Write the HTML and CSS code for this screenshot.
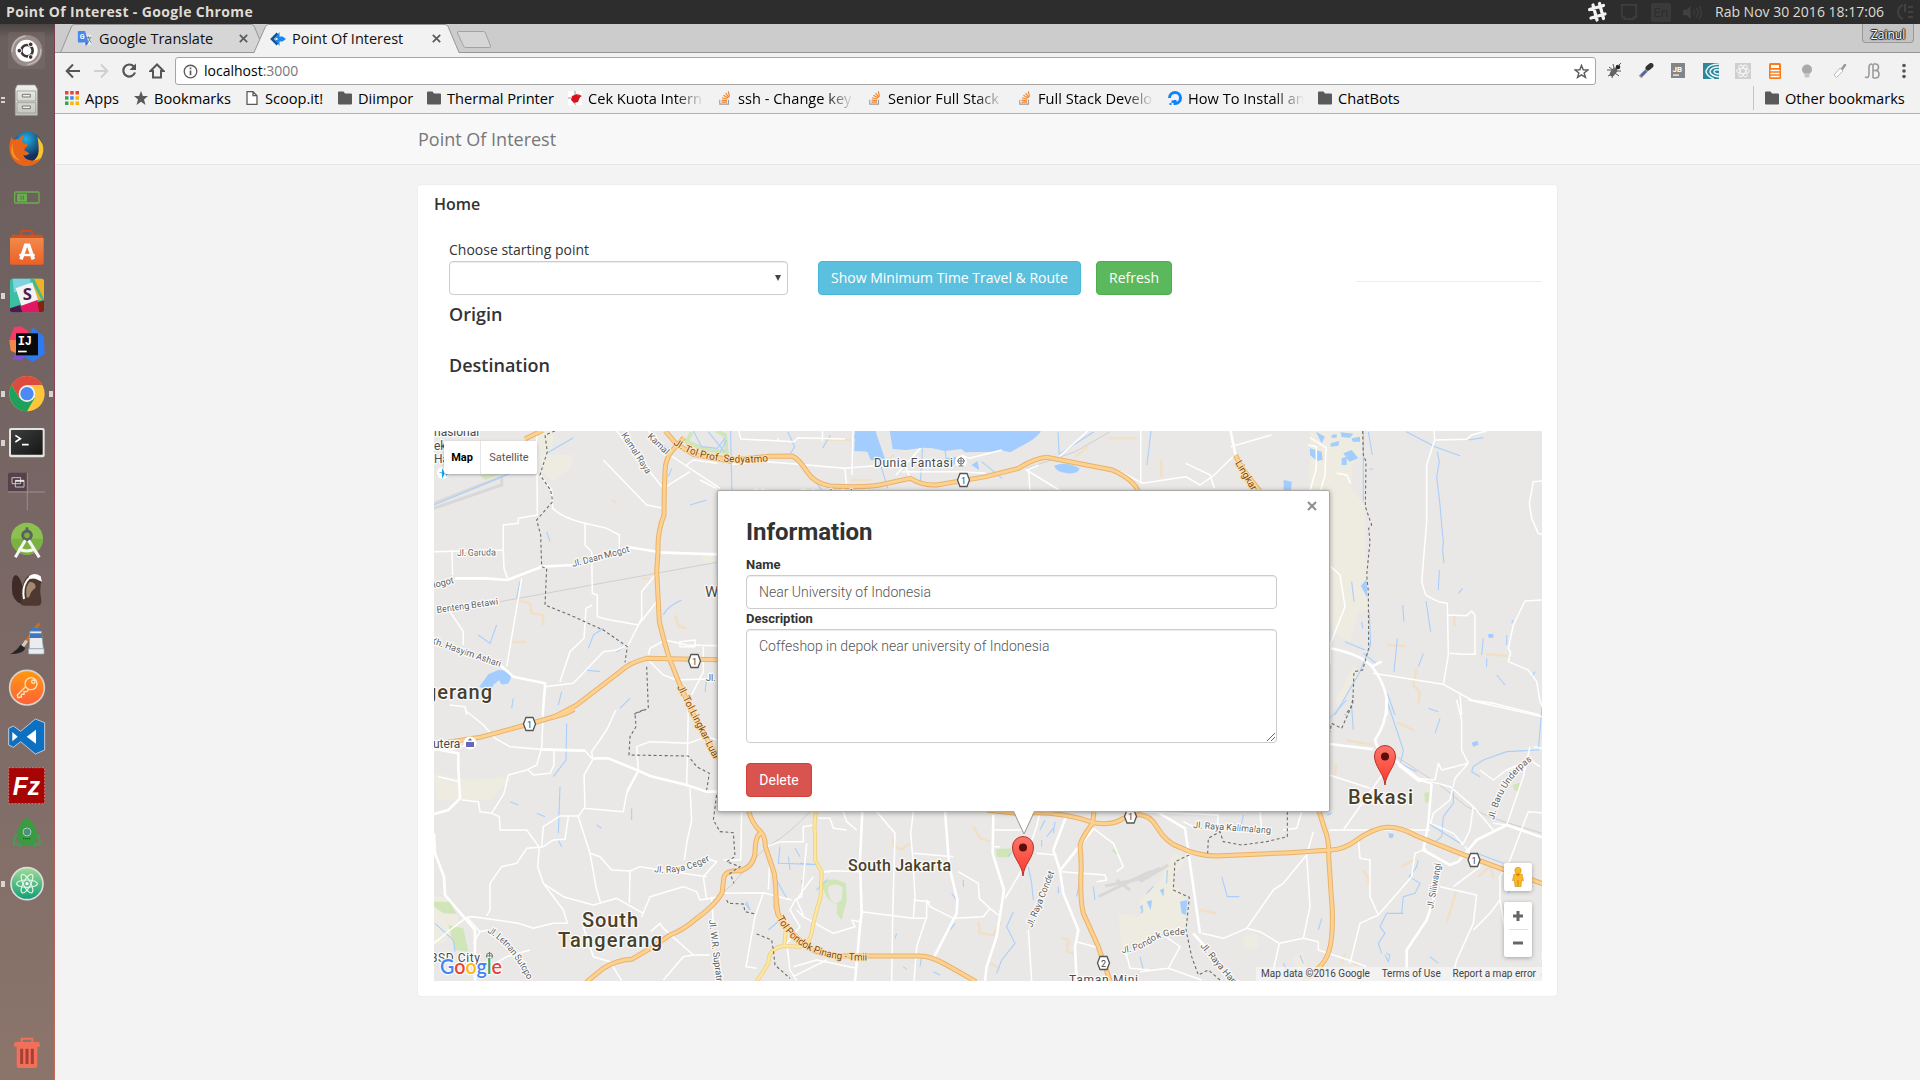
FILE: index.html
```html
<!DOCTYPE html>
<html lang="en">
<head>
<meta charset="utf-8">
<title>Point Of Interest</title>
<link rel="stylesheet" href="styles.css">
</head>
<body>
<svg class="defs" width="0" height="0" aria-hidden="true">
  <defs>
    <symbol id="folder" viewBox="0 0 14 13"><path fill="#5a5a5a" d="M1 0h4.500l1.500 2H13a1 1 0 0 1 1 1v9a1 1 0 0 1-1 1H1a1 1 0 0 1-1-1V1a1 1 0 0 1 1-1z"/></symbol>
    <symbol id="stack" viewBox="0 0 14 16"><path fill="none" stroke="#9a9b9e" stroke-width="1.200" d="M1 10v5h10v-5"/><path fill="none" stroke="#f48024" stroke-width="1.300" d="M3 12.700h6.300M3.100 10.500l6.300.6M3.700 7.800l6 1.700M5.200 4.900l5.300 3.200M7.600 2.400l3.900 5M10.800.5l1.300 6"/></symbol>
    <symbol id="close" viewBox="0 0 9 9"><path stroke="#5a5a5a" stroke-width="1.700" d="M.8.8l7.400 7.400M8.200.8L.8 8.200"/></symbol>
    <linearGradient id="pinfill" x1="0" y1="0" x2="0" y2="1"><stop offset="0" stop-color="#fe7569"/><stop offset="1" stop-color="#f8392b"/></linearGradient>
    <linearGradient id="atomfill" x1="0" y1="0" x2="0" y2="1"><stop offset="0" stop-color="#9fdc94"/><stop offset="1" stop-color="#0f9d76"/></linearGradient>
    <linearGradient id="keyfill" x1="0" y1="0" x2="0" y2="1"><stop offset="0" stop-color="#ff9a10"/><stop offset="1" stop-color="#ff5f3a"/></linearGradient>
    <linearGradient id="bagfill" x1="0" y1="0" x2="0" y2="1"><stop offset="0" stop-color="#f08a4c"/><stop offset="1" stop-color="#ee5f25"/></linearGradient>
    <linearGradient id="termfill" x1="0" y1="0" x2="1" y2="1"><stop offset="0" stop-color="#3c3f3e"/><stop offset="1" stop-color="#151515"/></linearGradient>
    <linearGradient id="cabfill" x1="0" y1="0" x2="0" y2="1"><stop offset="0" stop-color="#f1f1ed"/><stop offset="1" stop-color="#c3c4bd"/></linearGradient>
    <radialGradient id="foxfill" cx=".45" cy=".25" r=".6"><stop offset="0" stop-color="#1fb1e6"/><stop offset="1" stop-color="#15305f"/></radialGradient>
    <g id="pin"><path fill="url(#pinfill)" stroke="#b8322a" d="M0 40C-1 28-10.500 22-10.500 11a10.500 10.500 0 0 1 21 0C10.500 22 1 28 0 40z"/><circle cy="11.500" r="4" fill="#590e0b"/></g>
    <g id="shield"><path fill="#fff" stroke="#555" stroke-width="1.300" d="M-3.500-6.500h7L6 0 3.500 6.500h-7L-6 0z"/></g>
    <g id="motorways">
      <g transform="translate(430 425) scale(.33333)">
        <path d="M706 18L738 56M762 38L728 75Q706 100 705 140L703 190L702 270Q682 320 684 380L680 440L688 590Q705 660 718 700L750 780L795 880"/>
        <path d="M864 704L650 700Q600 712 570 740L440 840L368 878M285 42L338 16M738 56L790 88L905 110"/>
      </g>
      <g transform="translate(430 710) scale(.33333)">
        <path d="M432-2Q410 12 380 18L298 42L150 82L55 97M780 0L865 145M955 300Q965 340 992 365Q1006 380 1006 410L1033 490Q1040 540 1038 590L1046 620"/>
        <path d="M992 368Q975 380 975 430Q970 470 930 483Q890 480 882 500L876 550Q850 590 800 625Q760 660 720 675L670 710L605 748Q560 750 520 775L468 817"/>
      </g>
      <g transform="translate(700 425) scale(.40816 .33333)"><path d="M0 90L80 104L170 94L225 93Q240 98 262 140Q280 175 320 183Q400 188 440 180L515 160Q545 182 580 180L700 155L780 130Q820 100 850 97L1010 135Q1065 165 1076 205M1312 90Q1325 130 1372 198"/></g>
      <g transform="translate(700 700) scale(.33333)"><path d="M227 590L235 645Q270 700 330 745Q360 765 440 768L650 768Q690 765 740 795L828 845M860 330L945 340Q1080 330 1180 368Q1240 378 1270 355L1290 350L1322 343M1183 325L1178 370Q1140 420 1140 440Q1145 480 1143 520Q1140 600 1150 640L1195 740L1231 845"/></g>
      <g transform="translate(1140 700) scale(.33333)"><path d="M-8 343Q30 345 50 380Q80 430 120 442Q170 468 230 468L450 458L570 450Q610 450 650 420Q700 385 740 382Q780 380 830 408L960 460L1090 508L1210 552M535 328L555 390Q568 420 566 470L574 590Q580 650 575 710Q570 770 540 800L490 845"/></g>
    </g>
    <g id="avenue"><path transform="translate(700 700) scale(.33333)" d="M350 325Q340 370 345 400L345 480L365 515L362 590Q340 660 335 700Q325 735 300 740L250 738Q205 745 205 790L170 845M253 738L258 680"/></g>
  </defs>
</svg>

<header class="menubar">
  <span class="window-title">Point Of Interest - Google Chrome</span>
  <span class="indicators">
    <svg class="ind-hash" viewBox="0 0 20 22"><path fill="none" stroke="#f2f2f2" stroke-width="3.200" stroke-linecap="round" d="M6 4l4 15M12.500 2.500l4 15M2.500 8.500l14-4M4 17l14-4"/></svg>
    <svg class="ind-net" viewBox="0 0 20 20"><path fill="none" stroke="#3e3e3e" stroke-width="2" d="M2 2h16v14h-3v2H5v-2H2z"/></svg>
    <span class="ind-lang">En</span>
    <svg class="ind-sound" viewBox="0 0 20 16"><path fill="#414141" d="M0 5h4l4-4v14l-4-4H0z"/><path fill="none" stroke="#3c3c3c" stroke-width="1.500" d="M11 5q2 3 0 6M14 3q4 5 0 10M17 1q5 7 0 14"/></svg>
    <span class="clock">Rab Nov 30 2016 18:17:06</span>
    <svg class="ind-power" viewBox="0 0 18 18"><path fill="none" stroke="#414141" stroke-width="2" d="M7 2a7.500 7.500 0 0 0 0 14M9 1v8M12 4h5M12 9h5M12 14h5"/></svg>
  </span>
</header>

<div class="desktop">
<nav class="launcher">
  <div class="app"><svg viewBox="0 0 111 111"><rect width="111" height="111" rx="8" fill="#80716f" opacity=".4"/><circle cx="56" cy="56" r="47" fill="#9b8d8b"/><path fill="none" stroke="#c3b9b7" stroke-width="4" d="M12 60Q14 20 52 12M98 50q2 40-40 48"/><circle cx="56" cy="56" r="33" fill="#fff"/><circle cx="57" cy="56" r="17" fill="none" stroke="#413634" stroke-width="8"/><g fill="#413634" stroke="#fff" stroke-width="3"><circle cx="34" cy="56" r="7"/><circle cx="68" cy="37" r="7"/><circle cx="68" cy="75" r="7"/></g></svg></div>
  <div class="app"><i class="pips two"></i><svg viewBox="0 0 111 111"><path fill="url(#cabfill)" stroke="#a1a29a" stroke-width="2" d="M28 12h53l7 12v79H22V24z"/><path fill="none" stroke="#8d8f87" stroke-width="2" d="M27 30h56v30H27zM27 65h56v31H27z"/><path fill="#eee" stroke="#777" stroke-width="3" d="M43 40h24v8H43zM43 75h24v8H43z"/></svg></div>
  <div class="app"><svg viewBox="0 0 111 111"><circle cx="58" cy="50" r="45" fill="url(#foxfill)"/><path fill="#f7c531" d="M88 20q20 20 18 42-6 40-44 42 30-18 30-42 0-26-4-42z"/><path fill="#e8641b" d="M12 18Q0 46 6 68q12 40 52 40 26 0 40-24-18 12-34 6-16-4-18-16 10 6 18-4-6-6-14-8-2-8 6-12 4-4 2-8-12 0-16-6 0-10 8-20-14 2-18 12-8-2-14 2-8-4-6-12z"/><path fill="#f39a26" d="M14 38q-4 40 24 54-22-4-28-24-2-14 4-30z"/></svg></div>
  <div class="app"><svg viewBox="0 0 111 111"><rect x="20" y="39" width="73" height="33" rx="3" fill="none" stroke="#6aae4f" stroke-width="4"/><rect x="27" y="44" width="30" height="24" fill="#6aae4f"/><path stroke="#4b7a3b" stroke-width="3" d="M39 50v12M46 50v12"/></svg></div>
  <div class="app"><svg viewBox="0 0 111 111"><path fill="none" stroke="#cf4c1d" stroke-width="6" d="M39 40V15q0-7 8-7h18q8 0 8 7v25"/><path fill="#d5501f" d="M12 20h90l4 12H6z"/><path fill="url(#bagfill)" d="M6 30h101v75q0 5-5 5H11q-5 0-5-5z"/><path fill="none" stroke="#fff" stroke-width="11" d="M39 94l14-42h9l14 42"/><path stroke="#fff" stroke-width="7" d="M34 81h46"/></svg></div>
  <div class="app"><i class="pips"></i><svg viewBox="0 0 111 111"><g><rect x="6" y="5" width="102" height="101" rx="8" fill="#3bbfa2"/><path fill="#7fd3df" d="M14 5h56l-8 22-44 20z"/><path fill="#ecb424" d="M72 5h28q8 0 8 8v60L86 66z"/><path fill="#44b98b" d="M66 5h12l30 62v14z"/><path fill="#e31863" d="M36 84l50-18 14 40H44z"/><path fill="#8b1f14" d="M88 76l20-6v30q0 6-8 6h-6z"/><path fill="#4e1a4b" d="M6 94l30-10 8 22H14q-8 0-8-8z"/><path fill="#f5f2f4" d="M23 34l50-18 17 52-50 18z"/></g><text class="g-slack" x="58" y="69" text-anchor="middle">S</text></svg></div>
  <div class="app"><svg viewBox="0 0 111 111"><path fill="#f43b69" d="M18 4l20-3 24 14-16 32-42-6z"/><path fill="#f7864a" d="M4 42l30 0-4 42-22-10z"/><path fill="#7f52d6" d="M24 80h34L40 104 14 100z"/><path fill="#2f7af0" d="M74 4l34 28 2 52-36 24-32-20z"/><rect x="24" y="22" width="66" height="66" fill="#090909"/><text class="g-ij" x="29" y="58">IJ</text><path fill="#fff" d="M30 74h26v5H30z"/></svg></div>
  <div class="app"><i class="pips"></i><i class="pips right"></i><svg viewBox="0 0 111 111"><circle cx="57" cy="56" r="53" fill="#fbc63c"/><path fill="#dd4b3e" d="M11 30A53 53 0 0 1 103 30H57L34 69z"/><path fill="#1fa15d" d="M11 30A53 53 0 0 0 57 109L80 69H34z"/><circle cx="57" cy="56" r="25" fill="#f2f2f2"/><circle cx="57" cy="56" r="20" fill="#4a8af4"/></svg></div>
  <div class="app"><i class="pips"></i><svg viewBox="0 0 111 111"><rect x="3" y="12" width="107" height="88" rx="6" fill="#e3e3df"/><rect x="9" y="18" width="95" height="74" rx="2" fill="url(#termfill)"/><path fill="none" stroke="#fff" stroke-width="5" d="M22 34l15 10-15 10M42 62h20"/></svg></div>
  <div class="app"><svg viewBox="0 0 111 111"><path fill="#56414a" d="M0 4q0-5 5-5h53v56H0z"/><path stroke="#9c8f8e" stroke-width="3" d="M0 57h111M58 0v111"/><path fill="#4a3b41" stroke="#ddd" stroke-width="2.500" d="M12 14h26v18H12zM22 22h26v20H22z"/><path stroke="#fff" stroke-width="4" d="M22 24h26"/></svg></div>
  <div class="app"><svg viewBox="0 0 111 111"><circle cx="57" cy="50" r="48" fill="#8cc152"/><path fill="#7bb141" d="M9 50a48 48 0 0 0 96 0z"/><circle cx="57" cy="40" r="13" fill="#7bb141" stroke="#5b625e" stroke-width="9"/><path stroke="#5b625e" stroke-width="8" d="M57 16v12"/><path fill="none" stroke="#f5f5f5" stroke-width="9" d="M52 55L22 106M62 55l32 51M31 80q26 14 50 0"/></svg></div>
  <div class="app"><svg viewBox="0 0 111 111"><path fill="#3e2b26" d="M42 100Q10 88 12 50 10 14 24 12q14 6 20 38z"/><path fill="#4e382f" d="M40 102Q36 50 52 24 68 2 92 12q14 12 6 28-4 24 2 46 2 16-10 18H54q-10 0-14-2z"/><path fill="#a18870" d="M56 80Q50 44 66 32q20 2 16 20-14 8-18 26z"/><path fill="none" stroke="#fff" stroke-width="6" d="M48 84Q42 50 56 30 70 8 96 20"/><path fill="#fff" d="M62 16Q80 2 98 16l4 16-10-4q-12-8-24-4z"/></svg></div>
  <div class="app"><svg viewBox="0 0 111 111"><path stroke="#c1712b" stroke-width="9" d="M94 10L46 76"/><path stroke="#ccc" stroke-width="10" d="M56 62L42 82"/><path fill="#242424" d="M38 74l14 10q-6 18-46 18 18-8 32-28z"/><path fill="#3f78bd" d="M68 24h28l4 30H66z"/><path fill="#e9edf2" stroke="#9aa" stroke-width="2" d="M66 34h34l6 52H64zM62 86h46v16H62z"/><path fill="#3f78bd" d="M66 40h36v14H65z"/></svg></div>
  <div class="app"><svg viewBox="0 0 111 111"><circle cx="57" cy="56" r="52" fill="url(#keyfill)" stroke="#d9d2cc" stroke-width="5"/><g fill="none" stroke="#ffe3b8" stroke-width="4"><circle cx="69" cy="44" r="18"/><circle cx="76" cy="38" r="5"/><path d="M54 52L28 78l2 8 10-2v-8h8v-8h8l6-7"/></g></svg></div>
  <div class="app"><svg viewBox="0 0 111 111"><path fill="#0e70c0" stroke="#d5dde5" stroke-width="2.500" d="M82 3l28 11v82l-28 12-44-37-22 17-14-7V31l14-7 22 16z"/><path fill="#fff" d="M84 35v42L56 56zM13 42l16 14-16 14z"/></svg></div>
  <div class="app"><svg viewBox="0 0 111 111"><rect x="2" y="2" width="108" height="108" fill="#a70505" stroke="#d37777" stroke-width="3" stroke-dasharray="6 4"/><text class="g-fz" x="14" y="84" textLength="82" lengthAdjust="spacingAndGlyphs">Fz</text></svg></div>
  <div class="app"><svg viewBox="0 0 111 111"><path fill="#3b9b42" d="M57 4q30 22 30 56-4 22-14 28H41q-10-6-14-28Q27 26 57 4z"/><circle cx="57" cy="48" r="12" fill="#4d8f80" stroke="#a8cdb5" stroke-width="3"/><path stroke="#1c672c" stroke-width="4" stroke-dasharray="4 2" d="M45 68h24"/><path fill="none" stroke="#4a9a55" stroke-width="6" d="M26 54q-12 20-6 34M88 54q12 20 6 34M22 86q12-6 16 8M92 86q-12-6-16 8"/></svg></div>
  <div class="app"><i class="pips"></i><svg viewBox="0 0 111 111"><circle cx="57" cy="56" r="48" fill="url(#atomfill)" stroke="#ddd" stroke-width="5"/><g fill="none" stroke="#e0f6e4" stroke-width="3.500"><ellipse cx="57" cy="56" rx="31" ry="11"/><ellipse cx="57" cy="56" rx="31" ry="11" transform="rotate(62 57 56)"/><ellipse cx="57" cy="56" rx="31" ry="11" transform="rotate(-62 57 56)"/></g><circle cx="57" cy="56" r="5" fill="#fff"/></svg></div>
  <div class="app trash"><svg viewBox="0 0 111 111"><path fill="none" stroke="#f0705a" stroke-width="6" d="M41 28V14h32v14"/><path fill="#f0705a" d="M22 24h70q4 2 4 14H18q0-12 4-14zM26 36h62v60q0 6-6 6H32q-6 0-6-6z"/><path stroke="#a93e35" stroke-width="9" d="M41 44v46M57 44v46M73 44v46"/></svg></div>
</nav>

<div class="browser">
  <div class="tabstrip">
    <svg class="tab-shapes" viewBox="55 24 1865 29"><path fill="#d6d6d6" stroke="#969696" d="M60.500 52.500L71.500 26.500Q72.500 24.500 74.500 24.500H251Q253.500 24.500 254.500 27L265 52.500"/><path fill="none" stroke="#969696" d="M55 52.500H254M459 52.500H1920"/><path fill="#f2f2f2" stroke="#969696" d="M253.500 53.500L265.500 26.500Q266.500 24.500 268.500 24.500H445Q447 24.500 448 26.500L459.500 53.500"/><path fill="#d6d6d6" stroke="#a2a2a2" d="M458.500 31.500h25q1.500 0 2 1.500l5 13q.5 1.500-1 1.500h-24q-1.500 0-2-1.500l-6-13q-.5-1.500 1-1.500z"/></svg>
    <div class="tab"><svg class="fav" viewBox="0 0 16 18"><path fill="#e8e8e8" d="M6 4h9v12H6z"/><path fill="#4787ee" d="M1 0h7l4 13H1q-1 0-1-1V1q0-1 1-1z"/><path fill="#2f61c9" d="M8 13h4l-3 4z"/><text class="g-g" x="2" y="9.500">G</text><path fill="none" stroke="#6b7f8c" d="M9.500 7.500h5.500M12 6v2q2 4 3 5M14 8q-1 4-4 5"/></svg><span class="tab-name">Google Translate</span><svg class="x"><use href="#close"/></svg></div>
    <div class="tab active"><svg class="fav" viewBox="0 0 16 14"><path fill="none" stroke="#125590" stroke-width="2.600" d="M7.500 1.500L2 7l5.500 5.500"/><path fill="#1a87ef" d="M9.500 0L4.500 7l5 7V9.500h3L16 7l-3.500-2.500h-3z"/><path fill="#f2f2f2" d="M5.500 6h2v2h-2z"/></svg><span class="tab-name">Point Of Interest</span><svg class="x"><use href="#close"/></svg></div>
    <span class="profile">Zainul</span>
  </div>

  <div class="toolbar">
    <svg class="nav-icon" viewBox="0 0 16 16"><path fill="none" stroke="#555" stroke-width="2" d="M15 8H2M8 1.500L1.700 8 8 14.500"/></svg>
    <svg class="nav-icon" viewBox="0 0 16 16"><path fill="none" stroke="#d0d0d0" stroke-width="2" d="M1 8h13M8 1.500L14.300 8 8 14.500"/></svg>
    <svg class="nav-icon" viewBox="0 0 16 16"><path fill="none" stroke="#555" stroke-width="2.200" d="M12.800 3.500A6 6 0 1 0 14 9.500"/><path fill="#555" d="M15 .500v6.500H8.500z"/></svg>
    <svg class="nav-icon" viewBox="0 0 16 16"><path fill="none" stroke="#555" stroke-width="2" d="M8 1.500L1.500 8H4v6.500h8V8h2.500z"/></svg>
    <div class="omnibox">
      <svg class="info" viewBox="0 0 16 16"><circle cx="8" cy="8" r="6.700" fill="none" stroke="#5a5a5a" stroke-width="1.400"/><path stroke="#5a5a5a" stroke-width="1.800" d="M8 7v5M8 3.800v1.800"/></svg>
      <span class="url">localhost<i>:3000</i></span>
      <svg class="star" viewBox="0 0 16 16"><path fill="none" stroke="#5a5a5a" stroke-width="1.500" d="M8 1.500l1.800 4.700 4.900.2-3.900 3.100 1.400 4.800L8 11.600l-4.200 2.700 1.400-4.800L1.300 6.400l4.900-.2z"/></svg>
    </div>
    <div class="extensions">
      <svg viewBox="0 0 16 16"><ellipse cx="7.500" cy="9" rx="2.800" ry="5" transform="rotate(35 7.500 9)" fill="#666"/><circle cx="12" cy="4" r="2.300" fill="#222"/><path fill="none" stroke="#555" d="M1 7h5M3 4l4 3M2 13l4-2M6 15l1-4M9 10l4 3M9 8h6M8 5L7 1M12 3l3-3"/></svg>
      <svg viewBox="0 0 16 16"><path stroke="#999" stroke-width="3.500" d="M2 14l7-7"/><path stroke="#3f59d8" stroke-width="2" d="M3 13l5-5"/><path stroke="#333" stroke-width="5" stroke-linecap="round" d="M10 5l3-2.500"/></svg>
      <svg viewBox="0 0 16 16"><rect x="1" width="14" height="15" fill="#858585"/><text class="g-jb" x="2.500" y="9">JB</text><path fill="#fff" d="M3 11.500h6v1.200H3z"/></svg>
      <svg viewBox="0 0 16 16"><rect width="16" height="16" fill="#2f8699"/><path fill="none" stroke="#e8f6f8" stroke-width="1.500" d="M16 1Q5 1 3 8q0 5 8 8M16 4Q7 4 7 9q1 4 9 5M16 7q-5-1-5 2 1 2 5 2"/></svg>
      <svg viewBox="0 0 16 16"><rect width="16" height="16" fill="#cfcfcf"/><g fill="none" stroke="#f5f5f5"><ellipse cx="8" cy="8" rx="6.500" ry="2.600"/><ellipse cx="8" cy="8" rx="6.500" ry="2.600" transform="rotate(60 8 8)"/><ellipse cx="8" cy="8" rx="6.500" ry="2.600" transform="rotate(-60 8 8)"/></g></svg>
      <svg viewBox="0 0 16 16"><rect x="2" width="12" height="16" rx="1.500" fill="#fa7b17"/><path fill="#fff" d="M4 2h8v3H4z"/><path stroke="#fff" stroke-width="1.500" d="M3.500 7.500h9M3.500 10.500h9M3.500 13.500h9"/></svg>
      <svg viewBox="0 0 16 16"><circle cx="8" cy="6.500" r="5" fill="#aaa"/><rect x="5.500" y="10" width="5" height="4.500" rx="1.500" fill="#c5c5c5"/></svg>
      <svg viewBox="0 0 16 16"><path stroke="#999" stroke-width="2.500" stroke-linecap="round" d="M14 2l-3 4"/><path fill="#fbfbfb" stroke="#bbb" d="M9 5l3 3-6.500 6.500L3 12z"/></svg>
      <svg viewBox="0 0 16 16"><path fill="none" stroke="#9a9a9a" stroke-width="1.600" d="M1 14q4 2 4-3V4q0-3 3-3M9 1v14M9 1h2.500q3 0 3 3.200t-3 3.300H9M11.500 7.500q3.500 0 3.500 3.700T11.500 15H9"/></svg>
      <svg viewBox="0 0 16 16"><g fill="#555"><circle cx="8" cy="2.500" r="1.800"/><circle cx="8" cy="8" r="1.800"/><circle cx="8" cy="13.500" r="1.800"/></g></svg>
    </div>
  </div>

  <div class="bookmarks">
    <a class="w-apps"><svg viewBox="0 0 14 14"><path fill="#ea4335" d="M0 0h3.500v3.500H0zM5.200 0h3.500v3.500H5.200zM10.500 0H14v3.500h-3.500z"/><path fill="#34a853" d="M0 5.200h3.500v3.500H0z"/><path fill="#4285f4" d="M5.200 5.200h3.500v3.500H5.200z"/><path fill="#fbb605" d="M10.500 5.200H14v3.500h-3.500zM5.200 10.500h3.500V14H5.200zM10.500 10.500H14V14h-3.500z"/><path fill="#34a853" d="M0 10.500h3.500V14H0z"/></svg><span>Apps</span></a>
    <a class="w-bookmarks"><svg viewBox="0 0 14 14"><path fill="#5a5a5a" d="M7 0l1.900 4.900 5.100.2-4 3.300L11.500 14 7 10.800 2.500 14 4 8.400 0 5.100l5.100-.2z"/></svg><span>Bookmarks</span></a>
    <a class="w-scoop"><svg viewBox="0 0 14 14"><path fill="#fff" stroke="#5a5a5a" stroke-width="1.300" d="M2 .7h6l4 4v8.600H2zM8 .7v4h4"/></svg><span>Scoop.it!</span></a>
    <a class="w-diimpor"><svg><use href="#folder"/></svg><span>Diimpor</span></a>
    <a class="w-thermal"><svg><use href="#folder"/></svg><span>Thermal Printer</span></a>
    <a class="w-site cek"><svg viewBox="0 0 14 14"><rect x="-1" y="-1" width="16" height="16" fill="#fff"/><path fill="none" stroke="#bbb" stroke-width="1.500" d="M7 4V0M3 7H0M6 11q2 3 1 3"/><path fill="#d9121f" d="M4 5l5-2 3 3-2 5-4 1-3-3z"/><path fill="#c22" d="M10 3l4 2-3 2z"/></svg><span>Cek Kuota Intern</span></a>
    <a class="w-site ssh"><svg><use href="#stack"/></svg><span>ssh - Change key</span></a>
    <a class="w-site senior"><svg><use href="#stack"/></svg><span>Senior Full Stack</span></a>
    <a class="w-site full"><svg><use href="#stack"/></svg><span>Full Stack Develo</span></a>
    <a class="w-site howto"><svg viewBox="0 0 14 14"><path fill="none" stroke="#0f82ff" stroke-width="3" d="M1.500 7A5.500 5.500 0 1 1 7 12.500V9"/><path fill="#0f82ff" d="M3.500 9.500h2.500V12H3.500zM1.500 12h2v2h-2z"/></svg><span>How To Install an</span></a>
    <a class="w-chat"><svg><use href="#folder"/></svg><span>ChatBots</span></a>
    <a class="w-other"><svg><use href="#folder"/></svg><span>Other bookmarks</span></a>
  </div>

  <div class="page">
    <div class="navbar"><span class="brand">Point Of Interest</span></div>
    <main class="card">
      <h4 class="card-title">Home</h4>
      <label class="field-label">Choose starting point</label>
      <div class="controls">
        <div class="select"><i></i></div>
        <button class="btn info-btn">Show Minimum Time Travel &amp; Route</button>
        <button class="btn success-btn">Refresh</button>
        <hr>
      </div>
      <h4 class="section origin">Origin</h4>
      <h4 class="section destination">Destination</h4>

      <div class="map">
        <svg class="tiles" viewBox="434 431 1108 550">
          <rect x="434" y="431" width="1108" height="550" fill="#e9e8e7"/>
          <g class="land">
            <path transform="translate(1310 425) scale(.33333)" d="M0 18H160L155 90L128 120L122 190L165 240V380L175 450L178 555L145 560L120 650L70 625L55 560V200H0zM60 130L120 120M75 830L130 720L150 740L90 850z"/>
            <path transform="translate(430 710) scale(.33333)" d="M12 190L120 210L250 200L180 270H20zM0 560H60L90 640L40 700H12z"/>
            <path transform="translate(700 700) scale(.33333)" d="M1255 640L1320 650L1350 620V725L1265 735z"/>
            <path transform="translate(1140 700) scale(.33333)" d="M0 600L60 540L100 460L140 470L100 540L135 600L140 690L60 700L0 735zM310 710L350 700L355 740L315 750zM460 770L490 755L500 800L470 810z"/>
            <path transform="translate(430 425) scale(.33333)" d="M320 18H375L360 90H430L420 130L370 170L335 140zM818 390L860 380V415H818z"/>
          </g>
          <g class="airport">
            <path transform="translate(430 425) scale(.33333)" d="M12 235L215 155V180L12 250"/>
            <path transform="translate(700 700) scale(.33333)" d="M1195 590L1350 515M1215 558L1350 530M1250 540L1290 570"/>
            <path transform="translate(1140 700) scale(.33333)" d="M0 545L85 495M0 530L60 505"/>
          </g>
          <g class="park">
            <path transform="translate(430 425) scale(.33333)" d="M150 150L210 148L165 165z"/>
            <path transform="translate(430 710) scale(.33333)" d="M12 575L60 575L80 612L40 610L12 590zM55 645L100 655L115 725L75 720zM1195 500L1175 530L1195 570z"/>
            <path transform="translate(700 700) scale(.33333)" d="M372 545Q400 530 438 550L440 600L425 660L410 640L412 615Q370 600 372 545zM888 447L935 445L925 472H890zM1240 445L1258 460L1250 465L1236 452z"/>
            <path transform="translate(1140 700) scale(.33333)" d="M853 278L873 275L875 306L855 308zM1118 255L1140 248L1135 275L1122 270z"/>
          </g>
          <path class="park-ring" transform="translate(430 425) scale(.33333)" d="M785 22L770 50L830 75L890 82L885 30L860 18"/>
          <path fill="#e9e8e7" transform="translate(700 700) scale(.33333)" d="M384 562Q405 545 428 562L425 600L405 612Q384 600 384 562z"/>
          <g class="sandline">
            <path transform="translate(430 425) scale(.33333)" d="M260 525L300 535L305 565L340 570L338 600M238 652L285 650M545 225L558 232M635 460L660 462M735 570L745 605L770 610"/>
            <path transform="translate(1310 425) scale(.33333)" d="M230 660L286 663M432 572L434 605M528 688L592 692M320 730L310 780L330 805L325 835"/>
            <path transform="translate(1140 700) scale(.33333)" d="M950 570L920 668M178 630L230 640M618 120L700 135M773 68L822 92M590 190L585 225M670 510L690 545L680 550M785 500L830 475M1015 530L1050 500L1060 535M605 790L615 760M635 785L655 795"/>
            <path transform="translate(700 700) scale(.33333)" d="M580 415V438L605 448L630 430M820 380L840 415L870 425M835 665L840 700L880 705L905 665M1085 715L1105 720L1100 755L1130 765M870 790L900 805"/>
            <path transform="translate(700 425) scale(.40816 .33333)" d="M920 95L950 65M1000 40H1070M1130 105V155M300 45H370M370 165H420M450 120L475 90"/>
          </g>
          <g class="water">
            <path transform="translate(700 425) scale(.40816 .33333)" d="M380 18L378 78L410 80L418 105L455 108L430 18zM465 18L472 72L505 75L545 68L570 70L600 78L640 72L650 82L720 80L735 75L760 82L810 48Q832 30 835 18zM868 122Q895 108 930 130Q928 148 900 145Q870 140 868 122zM600 100L628 95L625 118L598 122zM665 120L680 108L684 135zM1430 165L1450 170L1448 197H1430z"/>
            <path transform="translate(1310 425) scale(.33333)" d="M0 70L35 80L38 105L20 108L0 90zM18 20L45 35L35 55zM65 30L80 28V38H65zM92 22L130 26L120 38L95 36zM62 55L88 48L85 62L62 65zM100 85L125 75L145 100L118 110zM125 40L150 35V50H128zM95 100L110 95V120H95zM153 483L170 462L172 518zM535 627H550V638H535z"/>
            <path transform="translate(430 425) scale(.33333)" d="M148 785L175 748L205 735L235 738Q250 755 235 775Q210 785 208 765L190 780L185 798L165 792z"/>
            <path transform="translate(1140 700) scale(.33333)" d="M60 570L72 565L70 590zM120 605L142 600L138 645L125 640zM20 605L36 600L32 630zM0 620L8 615V640zM745 400L762 402L758 414H748zM995 128L1012 122L1016 134L1000 140z"/>
          </g>
          <g class="river">
            <path transform="translate(430 425) scale(.33333)" d="M12 240L320 112M350 85L430 38M790 18L815 65L862 70L885 40M868 85L890 45M862 390V450M700 570Q710 545 755 525M475 670L490 630L520 610M80 50L130 130M560 680L600 655M250 820L245 850M395 800L385 840M145 630L180 655L200 600M270 470L260 520M350 320L360 350M725 130L715 155M730 80L700 60M780 240L830 225M465 735L510 740M830 760L825 800M600 820L570 850"/>
            <path transform="translate(430 710) scale(.33333)" d="M410 40L408 150L370 200M390 230L385 370M605 295V330M500 345L515 355M385 390L395 410M15 640L70 690L75 725M240 275L265 285M320 310L345 320M1075 440L1080 480M1110 460L1165 465M1115 510L1120 545M1040 510L1070 565M950 575L960 600M205 760L215 775"/>
            <path transform="translate(700 425) scale(.40816 .33333)" d="M75 18L78 195M215 20L232 65L222 85M265 140L298 195M375 20L390 80M545 70L540 170M600 75L605 110M690 110L740 160M877 20L880 90M965 20L880 88M1105 18L1095 120M440 110L460 190M320 30L300 70M20 20L60 80"/>
            <path transform="translate(1310 425) scale(.33333)" d="M160 18V230M175 20L187 90M178 132H190M289 20L375 65L450 92M382 80L388 110L380 155L390 240L395 300L400 350L398 375L402 415M388 435L385 495M445 505L458 490M475 45L520 38M605 595L610 585M278 540L282 590M348 528L362 620M262 640L252 740M105 650L165 675M155 590L158 610M340 685L325 725M178 560L182 660L150 740L75 870M160 685L198 715M232 805L255 870M125 470L132 530M520 640L515 690M590 630V660M560 750L585 780M530 700V725M675 740L665 755"/>
            <path transform="translate(1140 700) scale(.33333)" d="M620 0L565 60M635 20L640 90M740 0L770 90L790 150L780 200M865 25L895 35M900 55L885 100M1206 20L1195 150L1100 155L1030 180L1000 200L995 215L1020 230M940 250V310L910 350L905 410L880 430M770 185L830 215M862 368L960 430M1010 460L1090 490M835 480L830 500L808 530L840 550L825 580L790 590L785 640M790 640L740 640L720 680L735 700L715 730L725 760M735 765L745 785L750 765L738 760M545 655L535 690M245 530L262 590L298 590M310 345L300 395M575 340L562 345M1120 540L1105 580M480 765L490 790M430 790L445 820M640 830L625 820M870 770L895 790M1100 640L1110 660M40 560L20 580M82 510L80 550"/>
            <path transform="translate(700 700) scale(.33333)" d="M1035 360L1020 390M1060 385L1040 410M1025 420V440M985 500L995 550L1000 600M940 635L920 680L945 730L905 780L890 820M240 440L235 490L340 493M285 445L300 470M380 540L350 570M790 540V560M755 580L770 600M600 485L620 500M590 700L585 715M750 690L765 670M610 800L620 808M665 770L660 800M1075 560V580M1140 540L1130 590M1180 560L1185 600M1330 630L1322 640M1320 770L1330 810M205 690L240 660M135 610L150 630M925 470L940 450M700 815L720 825M1065 365L1060 400"/>
          </g>
          <g class="rail">
            <path transform="translate(430 425) scale(.33333)" d="M210 530L860 412"/>
            <path transform="translate(430 710) scale(.33333)" d="M1140 305Q1080 370 1020 405L990 430L900 530L860 560"/>
            <path transform="translate(1140 700) scale(.33333)" d="M770 170L900 255L980 320L1060 355L1206 400"/>
            <path transform="translate(700 425) scale(.40816 .33333)" d="M1005 20L920 80L800 130"/>
          </g>
          <g class="minor">
            <path transform="translate(430 425) scale(.33333)" d="M320 18L322 270L265 280V295L220 300V375L12 380M220 375L222 430L232 460M66 375L68 450M275 460L230 725M330 150L365 195L368 250Q400 280 465 295L530 310L568 330V372L560 380M465 295V360L485 380L487 505L502 510V575L530 583L625 600L635 580L635 500L680 445M487 540L468 550L462 640L420 680L390 770M625 600L595 660L560 675L520 680L430 775L345 785M520 105L650 240L700 250M700 190L780 140M655 18L720 90L870 190M770 120L790 105L862 115M60 560L100 620V660M60 840L105 845L110 870M655 705L700 750L740 765L825 762M820 665V740L785 810M655 690L660 670L705 645L770 660L862 662M680 530L625 600M560 18L700 190M750 650V665H795V645z"/>
            <path transform="translate(430 710) scale(.33333)" d="M105 0L160 45L195 85L240 110L330 118M340 0L335 115L320 165L290 180L235 195L222 250L185 310M295 180L310 195L360 190L372 165V120M335 120L465 122L490 150M558 0L530 60L485 125L488 150L462 195L465 290L445 320L480 430L500 540L512 580M462 295L580 305L590 250L625 185M625 185L620 110L660 95L775 100L830 80L862 90M775 0L770 230M780 235L785 330L770 400L763 450M625 180L590 245M445 318L390 318L340 350L335 410M415 320L405 388L370 390L340 410L328 412M328 412L290 360L210 360L208 320L185 310L150 305L145 275L95 270M328 412L323 470L340 520L400 600L412 640L370 640L310 655L265 640L130 620L110 622M328 412L290 415L260 460L215 470L180 520V600L170 618M480 430L510 440L545 480L600 483L598 580M600 483L630 470L830 500M340 520L400 560L490 585L560 565L640 610M635 620L660 560L760 530L800 545L810 570L870 560M830 445L860 455L820 500L830 570M110 622L60 660L12 700M110 622L150 665L175 660M130 800L230 740L300 720M150 665L130 700M460 650L490 740L540 755L575 812M662 665L690 640L700 655L790 735L760 740L700 810M790 735H840M845 560L850 640M870 550L1000 548L1085 570M1000 548L975 620L948 770L980 775M1010 410L1020 440L1015 540M1010 410L1050 395L1120 395V350L1150 345M1095 570L1080 600L1110 650L1070 700L1080 780L1100 812M1095 570L1115 560L1130 400M1180 485H1200M935 300L932 450L880 450M1090 800L1190 750M12 120H60L130 100M25 200L90 215"/>
            <path transform="translate(700 425) scale(.40816 .33333)" d="M95 18L100 42L230 50L240 38L355 42M300 18V50M190 40L195 50M375 18L372 150M78 118L165 110L240 118L355 130L360 190M355 130L500 115L515 160M480 150L540 70M495 140L640 140L700 145M640 90L660 100L740 75M830 120L800 135L880 195M805 130L808 195M950 18L880 95M1080 18L1080 175M1030 140L1085 175L1190 155L1225 180L1255 155L1310 90M1190 115L1250 150L1260 190M0 165L40 190M1300 65L1400 30M1490 60L1510 65V130L1495 195"/>
            <path transform="translate(1310 425) scale(.33333)" d="M372 18L374 45L350 120V290L335 470L347 510L365 520L385 530L412 535L415 690L400 780M372 45L470 43L485 30L530 18M0 38L48 68L45 150L32 195M62 425L90 450L105 545L62 655L60 720M415 570L470 572L485 558L495 570V688H460L418 685M700 168L670 170L658 235L665 280L685 325L700 330M700 525L645 528L610 600L595 670L602 683L595 710L655 735L680 770L690 830L700 850M190 745L400 778L485 825L550 835L690 870M450 810L455 870M80 145L110 150L122 175"/>
            <path transform="translate(1140 700) scale(.33333)" d="M0 335L235 345L232 375M130 365L160 380M360 335L365 390M568 225L690 265M740 205L610 390M568 390H870M430 390L470 385L485 335M520 395L500 465M500 465L510 620L490 715M500 465L430 550L400 570L320 685M320 685L360 695L418 730L400 810M418 730L490 715L535 725V750L610 775L680 800M320 685L250 715L185 700M655 415L660 475L690 480V590L715 645M860 445L825 460L815 530L715 645L660 670L630 790M950 0L965 60V150L985 190M985 190L905 210L895 190L885 240L830 235L775 195M985 190L945 235L930 300L880 340L872 370L940 400L970 435M875 245L930 260L1000 320L990 390L970 430M1000 320L1060 390M985 0L1206 50M1060 370L1100 375L1150 230L1170 140M1206 145L1180 140M1165 335L1110 480L1080 530V600L1095 690M1165 335L1206 338M900 560L1010 585L1000 670L950 780L935 840M1080 600L1050 640L1000 690M1020 210L1060 240L1100 210L1170 180L1200 200M975 440L1020 500L940 560M70 705L120 740L85 805L0 815M85 805L185 840"/>
            <path transform="translate(700 700) scale(.33333)" d="M355 355L390 355L400 385L440 390M430 335L440 365L470 390M370 515L400 512L480 515M530 335L585 400L578 650L575 843M640 335L632 400L638 470L645 590L640 655L680 655M640 460L760 470M485 635L640 655L680 655L680 600L690 620L720 635L760 655L850 650L870 625M775 515L835 550L838 595L870 625L895 645M640 600L690 605M680 650L650 740L642 843M875 390H965M1020 335L1010 380L960 520L915 595M880 440H900M1010 460L1070 465M1085 515L1215 525L1220 540L1190 545M1180 385L1240 430L1270 500L1250 515M455 660L465 680L400 700L310 650L290 630M290 600L310 570L340 530M485 635L480 665L455 660M480 665L470 800M280 800L350 780L470 805M1130 725L1200 745M1265 755L1280 765L1290 805L1350 810M985 690L995 843M290 600L310 645"/>
          </g>
          <g class="major">
            <path transform="translate(430 425) scale(.33333)" d="M75 460L165 460L232 465L335 425L430 420M590 365L700 383L860 388M210 720L250 755L345 775V785L338 870"/>
            <path transform="translate(430 710) scale(.33333)" d="M490 145L535 145L625 182L660 198L770 225L830 245H862M30 120L85 130V175L90 265L55 300L12 312M12 370L15 430L42 500L45 555L135 660V812M330 118L465 122"/>
            <path transform="translate(700 425) scale(.40816 .33333)" d="M1300 18L1312 90"/>
            <path transform="translate(1310 425) scale(.33333)" d="M62 670Q160 690 190 730Q220 770 230 820V870M185 725L215 710"/>
            <path transform="translate(1140 700) scale(.33333)" d="M738 0Q745 60 705 120L712 140L840 240L875 250M568 132L700 148M875 250L865 370L850 450L930 495L955 485L1010 420L1100 375L1206 412M50 335L135 385L180 700M160 700L200 745M890 570L860 660L800 750V840M775 195L840 245"/>
            <path transform="translate(700 700) scale(.33333)" d="M1100 345L1060 450L1080 512L1180 385M1080 512L1090 580L1135 690L1125 740L1130 843M735 335L748 500L772 600L770 640L700 775M880 345L878 460L912 570L890 710L860 800L855 843M487 335L480 480L485 640L480 680L465 843"/>
          </g>
          <g class="av-case"><use href="#avenue"/></g><g class="av-fill"><use href="#avenue"/></g>
          <g class="mw-case"><use href="#motorways"/></g><g class="mw-fill"><use href="#motorways"/></g>
          <g class="border">
            <path transform="translate(430 425) scale(.33333)" d="M375 18L345 30L352 80L330 150L362 195L368 230L320 285L332 330L335 425L350 430L345 540L420 570L520 615L592 665L585 712M650 725L655 850L612 868"/>
            <path transform="translate(430 710) scale(.33333)" d="M640 0L615 10L618 50L600 80L597 135L775 138L800 170L838 190L830 240M860 255L850 330L870 365L910 368L915 440L890 455L930 470L900 490L912 520M890 570L895 580L940 582L945 605L975 612M980 672L1025 690L1030 720L1035 765L1080 805"/>
            <path transform="translate(1310 425) scale(.33333)" d="M158 18L160 90L168 110L166 245L185 300L176 310L180 350L170 450L175 500L176 670L158 735L132 740L128 840L105 870"/>
            <path transform="translate(1140 700) scale(.33333)" d="M638 0L632 25L605 85L575 70L568 100M442 335V410L380 425L305 435L250 425L240 395L205 415L203 460M148 465L105 485L100 570L148 592L138 690L155 770L175 825L205 810L240 840"/>
          </g>
          <g class="lbl">
            <text transform="translate(457 556) rotate(-1)" textLength="39">Jl. Garuda</text>
            <text transform="translate(573 567) rotate(-15)" textLength="59">Jl. Daan Mogot</text>
            <text transform="translate(434 588) rotate(-14)">logot</text>
            <text transform="translate(437 613) rotate(-8)" textLength="62">Benteng Betawi</text>
            <text transform="translate(430 643) rotate(19)" textLength="74">Kh. Hasyim Ashari</text>
            <text transform="translate(621 435) rotate(57)" textLength="47">Kamal Raya</text>
            <text transform="translate(647 437) rotate(44)">Kamal</text>
            <text x="706" y="681">Jl.</text>
            <path id="t-ceger" fill="none" d="M654 872Q680 876 709 861"/><text><textPath href="#t-ceger">Jl. Raya Ceger</textPath></text>
            <path id="t-letnan" fill="none" d="M487 932Q512 946 530 985"/><text><textPath href="#t-letnan" textLength="64">Jl. Letnan Sutopo</textPath></text>
            <text transform="translate(709 920) rotate(83)" >Jl. W.R. Supratman</text>
            <text transform="translate(1032 928) rotate(-68)" textLength="60">Jl. Raya Condet</text>
            <text transform="translate(1193 828) rotate(4)" textLength="78">Jl. Raya Kalimalang</text>
            <text transform="translate(1433 909) rotate(-80)" textLength="46">Jl. Siliwangi</text>
            <path id="t-baru" fill="none" d="M1494 820Q1503 780 1533 760"/><text><textPath href="#t-baru">Jl. Baru Underpass</textPath></text>
            <path id="t-gede" fill="none" d="M1122 953Q1140 952 1155 940Q1168 934 1186 935"/><text><textPath href="#t-gede">Jl. Pondok Gede</textPath></text>
            <text transform="translate(1200 946) rotate(50)">Jl. Raya Hankam</text>
            <text transform="translate(1545 978) rotate(-80)" opacity=".5">Ka. Wisata</text>
          </g>
          <g class="toll">
            <path id="t-sed" fill="none" d="M673 444Q705 468 772 461"/><text><textPath href="#t-sed" textLength="99">Jl. Tol Prof. Sedyatmo</textPath></text>
            <text transform="translate(677 687) rotate(63)" textLength="82">Jl. Tol Lingkar Luar</text>
            <path id="t-tmii" fill="none" d="M777 918Q800 965 874 960"/><text><textPath href="#t-tmii" textLength="106">Tol Pondok Pinang - Tmii</textPath></text>
            <text transform="translate(1235 463) rotate(59)">Lingkar L</text>
          </g>
          <g class="place">
            <text x="434" y="436">nasional</text><text x="434" y="450">ek</text><text x="434" y="463">Ha</text>
            <text x="874" y="467" textLength="79">Dunia Fantasi</text><text x="705" y="597" class="big">W</text>
            <text x="433" y="748">utera</text><text x="430" y="962" textLength="50">BSD City</text>
            <text x="754" y="499" textLength="121">Museum Sejarah Jakarta</text>
            <text x="1069" y="984" textLength="69">Taman Mini</text>
          </g>
          <g class="city">
            <text x="425" y="699" textLength="67">gerang</text><text x="582" y="927" textLength="56">South</text><text x="558" y="947" textLength="104">Tangerang</text>
            <text x="1348" y="804" textLength="65">Bekasi</text><text class="mid" x="848" y="871" textLength="103">South Jakarta</text>
          </g>
          <g><use href="#shield" x="963.500" y="480"/><use href="#shield" x="694.500" y="661"/><use href="#shield" x="529.500" y="724"/><use href="#shield" x="1130.500" y="816.500"/><use href="#shield" x="1474" y="860"/><use href="#shield" x="1103.500" y="963"/></g>
          <g class="route"><text x="963.500" y="483.500">1</text><text x="694.500" y="664.500">1</text><text x="529.500" y="727.500">1</text><text x="1130.500" y="820">1</text><text x="1474" y="863.500">1</text><text x="1103.500" y="966.500">2</text></g>
          <circle cx="470" cy="743" r="6.500" fill="#fff"/><path fill="#6568b5" d="M466 742h8v5h-8zM468 740.500q2-4 4 0z"/>
          <circle cx="961" cy="461.500" r="6" fill="#fff"/><g fill="none" stroke="#777"><circle cx="961" cy="461" r="3"/><path d="M961 457v9M957 461h8M958.500 466h5"/><circle cx="489.500" cy="956" r="3"/><path d="M489.500 952v9M486 956h7"/></g>
          <circle cx="443" cy="473" r="6" fill="#fff"/><path fill="#14a9f2" d="M438.500 472.500l8-1V469l1.500 4-1.500 4v-2.500zM442 468l2 4v3l-2 4z"/>
          <text class="google" x="440" y="973.500" textLength="62" lengthAdjust="spacingAndGlyphs"><tspan fill="#4285f4">G</tspan><tspan fill="#ea4335">o</tspan><tspan fill="#fbbc05">o</tspan><tspan fill="#4285f4">g</tspan><tspan fill="#34a853">l</tspan><tspan fill="#ea4335">e</tspan></text>
          <use href="#pin" x="1023" y="836"/><use href="#pin" x="1385" y="745"/>
        </svg>
        <div class="map-type"><b>Map</b><span>Satellite</span></div>
        <div class="info-window">
          <svg class="info-close" viewBox="0 0 10 10"><path stroke="#8e8e8e" stroke-width="2" d="M1 1l8 8M9 1L1 9"/></svg>
          <h3>Information</h3>
          <label>Name</label>
          <div class="input">Near University of Indonesia</div>
          <label>Description</label>
          <div class="input area">Coffeshop in depok near university of Indonesia<svg viewBox="0 0 8 8"><path stroke="#666" d="M0 8L8 0M4 8l4-4"/></svg></div>
          <button class="btn danger-btn">Delete</button>
          <svg class="tail" viewBox="0 0 22 25"><path fill="#fff" d="M1 0L11 22 21 0z"/><path fill="none" stroke="#999" d="M1 1.500L11 23 21 1.500"/></svg>
        </div>
        <div class="pegman"><svg viewBox="0 0 12 20"><circle cx="6" cy="3.500" r="3.200" fill="#fbb829" stroke="#d28b14" stroke-width=".6"/><path fill="#fbb829" stroke="#d28b14" stroke-width=".6" d="M2 7h8l1.500 6.500-2 .5-.5 5.500H3L2.500 14l-2-.5z"/><path fill="#d67416" d="M4 7h4L6 9.500z"/><path stroke="#d28b14" d="M6 13v6"/></svg></div>
        <div class="zoom"><svg viewBox="0 0 12 12"><path stroke="#666" stroke-width="3" d="M1 6h10M6 1v10"/></svg><i></i><svg viewBox="0 0 12 12"><path stroke="#666" stroke-width="3" d="M1 6h10"/></svg></div>
        <div class="credits"><span>Map data ©2016 Google</span><span>Terms of Use</span><span>Report a map error</span></div>
      </div>
    </main>
  </div>
</div>
</div>
</body>
</html>
```
FILE: styles.css
```css
* { box-sizing: border-box; }
body { margin: 0; width: 1920px; height: 1080px; overflow: hidden; display: flex; flex-direction: column; font-family: "Open Sans", "Noto Sans", sans-serif; background: #f3f3f3; }
svg { display: block; flex: none; }
.defs { position: absolute; }
i { font-style: normal; }

/* system bar */
.menubar { height: 24px; flex: none; background: #2d2d2d; color: #dfdbd2; display: flex; justify-content: space-between; align-items: center; padding: 0 6px; font-size: 14px; line-height: 24px; }
.window-title { font-weight: 700; letter-spacing: 0.36px; }
.indicators { display: flex; align-items: center; }
.ind-hash { width: 20px; height: 22px; margin-right: 13px; }
.ind-net { width: 18px; height: 18px; margin-right: 13px; }
.ind-lang { width: 20px; height: 19px; line-height: 19px; border-radius: 2px; background: #3a3a3a; color: #2d2d2d; text-align: center; font-size: 13px; margin-right: 12px; }
.ind-sound { width: 19px; height: 15px; margin-right: 13px; }
.clock { width: 168px; margin-right: 13px; white-space: nowrap; }
.ind-power { width: 18px; height: 18px; }

/* launcher */
.desktop { flex: 1; display: flex; min-height: 0; }
.launcher { width: 55px; flex: none; border-right: 1px solid; border-image: linear-gradient(#7b3c4f 0%, #98434f 45%, #c96859 100%) 1; background: linear-gradient(#4c4543 0, #6a5f5e 14px, #6e6160 20%, #796765 50%, #8b756b 100%); padding-top: 2px; display: flex; flex-direction: column; }
.app { position: relative; height: 49px; flex: none; display: flex; align-items: center; padding-left: 8px; }
.app svg { width: 37px; height: 37px; overflow: visible; }
.trash { margin-top: auto; margin-bottom: 3px; }
.pips { position: absolute; left: 1px; width: 4px; height: 6px; background: #d8d3d1; }
.pips.right { left: 49px; }
.pips.two { background: linear-gradient(#d8d3d1 2px, transparent 2px 4px, #d8d3d1 4px); }
.g-slack { font: 700 50px "Open Sans", sans-serif; fill: #4b234b; }
.g-ij { font: 700 36px "Liberation Mono", monospace; fill: #fff; }
.g-fz { font: italic 700 78px "Liberation Sans", sans-serif; fill: #fff; }
.g-g { font: 700 8px Roboto, sans-serif; fill: #fff; }
.g-jb { font: 700 8px Roboto, sans-serif; fill: #fff; }

/* browser chrome */
.browser { flex: 1; min-width: 0; display: flex; flex-direction: column; }
.tabstrip { position: relative; height: 29px; flex: none; background: #ccc; display: flex; padding-left: 22px; font-size: 14.500px; color: #111; }
.tab-shapes { position: absolute; left: 0; top: 0; width: 1865px; height: 29px; }
.tab { position: relative; width: 193px; height: 29px; display: flex; align-items: center; }
.fav { width: 16px; height: 16px; margin-right: 6px; }
.tab-name { width: 140px; white-space: nowrap; }
.x { width: 9px; height: 9px; }
.profile { position: relative; margin: 0 6px 0 auto; width: 52px; height: 19px; border: 1px solid #999; border-top: 0; border-radius: 0 0 4px 4px; background: #c4c4c4; color: #fff; font-size: 12px; line-height: 21px; text-align: center; text-shadow: 0 0 1px #222, 1px 0 1px #222, -1px 0 1px #222, 0 1px 1px #222, 0 -1px 1px #222; }
.toolbar { height: 34px; flex: none; background: #f2f2f2; display: flex; align-items: center; padding-left: 10px; padding-top: 2px; }
.nav-icon { width: 16px; height: 16px; margin-right: 12px; }
.omnibox { width: 1421px; height: 28px; margin-left: -2px; background: #fff; border: 1px solid #a6a6a6; border-radius: 3px; display: flex; align-items: center; padding: 0 6px 0 7px; }
.info { width: 15px; height: 15px; margin-right: 6px; }
.url { flex: 1; font-size: 14px; line-height: 24px; color: #000; }
.url i { color: #777; }
.star { width: 15px; height: 15px; }
.extensions { display: flex; gap: 16.200px; margin-left: 10px; }
.extensions svg { width: 16px; height: 16px; }
.bookmarks { position: relative; height: 27px; flex: none; background: #f2f2f2; border-bottom: 1px solid #b2b2b2; padding-left: 10px; display: flex; align-items: center; font-size: 14.600px; color: #000; }
.bookmarks a { display: flex; align-items: center; flex: none; height: 24px; white-space: nowrap; margin-top: -4px; }
.bookmarks svg { width: 14px; height: 14px; margin-right: 6px; }
.w-apps { width: 69px; } .w-bookmarks { width: 111px; } .w-scoop { width: 93px; } .w-diimpor { width: 89px; } .w-thermal { width: 141px; } .w-site { width: 150px; } .w-chat { width: 90px; }
.w-site span { width: 116px; -webkit-mask-image: linear-gradient(90deg, #000 75%, transparent); mask-image: linear-gradient(90deg, #000 75%, transparent); }
.w-other { margin-left: auto; border-left: 1px solid #c4c4c4; width: 167px; padding-left: 11px; }

/* page */
.page { flex: 1; background: #f3f3f3; }
.navbar { height: 51px; background: #f8f8f8; border-bottom: 1px solid #e7e7e7; padding-left: 363px; display: flex; align-items: center; }
.brand { font-size: 18px; line-height: 20px; color: #777; }
.card { width: 1141px; height: 813px; margin: 19px 0 0 362px; background: #fff; border: 1px solid #eee; border-radius: 4px; padding: 1px 15px 0 16px; display: flex; flex-direction: column; }
h3, h4 { margin: 0; color: #333; }
.card-title { font-size: 16px; font-weight: 600; line-height: 20px; margin-top: 8px; }
.field-label { font-size: 14px; line-height: 20px; color: #333; margin: 26px 0 1px 15px; }
.controls { display: flex; padding-left: 15px; }
.select { width: 339px; height: 34px; border: 1px solid #ccc; border-radius: 4px; box-shadow: inset 0 1px 1px rgba(0,0,0,.075); display: flex; justify-content: flex-end; align-items: center; padding-right: 6px; }
.select i { border: 3px solid transparent; border-top: 6px solid #444; border-bottom: 0; }
.btn { height: 34px; border: 1px solid; border-radius: 4px; color: #fff; font: 14px/20px "Open Sans", sans-serif; padding: 0 12px; white-space: nowrap; }
.info-btn { width: 263px; margin-left: 30px; background: #5bc0de; border-color: #46b8da; }
.success-btn { width: 76px; margin-left: 15px; background: #5cb85c; border-color: #4cae4c; }
.controls hr { width: 186px; margin: 20px 0 0 auto; border: 0; border-top: 1px solid #eee; height: 0; align-self: flex-start; }
.section { font-size: 18px; font-weight: 600; line-height: 20px; margin-left: 15px; }
.origin { margin-top: 9px; } .destination { margin-top: 31px; }

/* map */
.map { position: relative; width: 1108px; height: 550px; margin-top: 56px; overflow: hidden; font-family: Roboto, sans-serif; }
.tiles { width: 1108px; height: 550px; }
.tiles path, #motorways path, #avenue path { vector-effect: non-scaling-stroke; }
#motorways path, #avenue path { fill: none; }
.land { fill: #eeebe1; } .park { fill: #d0e6b8; } .water { fill: #a3ccff; }
.park-ring { fill: none; stroke: #d0e6b8; stroke-width: 4; }
.airport { fill: none; stroke: #d8d8d8; stroke-width: 3; }
.sandline { fill: none; stroke: #f1dfc6; stroke-width: 2.500; }
.river { fill: none; stroke: #a9cffb; stroke-width: 1.100; }
.rail { fill: none; stroke: #cfcfcf; stroke-width: 1; }
.minor, .major { fill: none; stroke: #fff; stroke-linejoin: round; }
.minor { stroke-width: 1.500; } .major { stroke-width: 2.600; }
.av-case { stroke: #edcf7d; stroke-width: 4; } .av-fill { stroke: #fde6a0; stroke-width: 2.500; }
.mw-case { stroke: #e8b36a; stroke-width: 5; } .mw-fill { stroke: #fed190; stroke-width: 3; }
.border { fill: none; stroke: #6c6c6c; stroke-width: 1.100; stroke-dasharray: 3 2.500; }
.tiles text { font-family: Roboto, sans-serif; paint-order: stroke; stroke: rgba(255,255,255,.85); stroke-width: 2.500px; stroke-linejoin: round; }
.lbl text { font-size: 9.200px; fill: #606060; }
.toll text { font-size: 10px; fill: #7c4a12; stroke: #ffe0b2; stroke-width: 2px; }
.place text { font-size: 12px; fill: #4b4b4b; } .place .big { font-size: 15px; }
.city text { font-size: 20px; font-weight: 500; fill: #4a412b; } .city .mid { font-size: 16px; }
.tiles .route text { font-size: 9px; text-anchor: middle; fill: #444; stroke: none; }
.tiles .google { font: 600 21px Lato, sans-serif; }
.map-type { position: absolute; left: 10px; top: 10px; height: 33px; width: 93px; background: #fff; border-radius: 2px; box-shadow: 0 1px 3px rgba(0,0,0,.3); display: flex; align-items: center; font-size: 11px; color: #565656; }
.map-type b { width: 37px; line-height: 33px; border-right: 1px solid #e6e6e6; text-align: center; font-weight: 700; color: #000; }
.map-type span { flex: 1; text-align: center; }
.info-window { position: absolute; left: 283px; top: 59px; width: 613px; height: 322px; background: #fff; border: 1px solid #aaa; border-radius: 2px; box-shadow: 0 1px 5px rgba(0,0,0,.35); padding: 0 28px; display: flex; flex-direction: column; color: #333; }
.info-close { position: absolute; right: 12px; top: 10px; width: 10px; height: 10px; }
.info-window h3 { font-size: 24px; font-weight: 700; line-height: 26px; margin: 28px 0 11px; }
.info-window label { font-size: 13px; font-weight: 700; line-height: 18px; height: 18px; margin-bottom: 1px; }
.info-window .input { width: 531px; height: 34px; border: 1px solid #ccc; border-radius: 4px; box-shadow: inset 0 1px 1px rgba(0,0,0,.075); padding: 6px 12px; font-size: 14px; line-height: 20px; font-weight: 300; color: #555; margin-bottom: 1px; flex: none; }
.info-window .area { position: relative; height: 114px; margin-bottom: 20px; }
.area svg { position: absolute; right: 1px; bottom: 1px; width: 8px; height: 8px; }
.danger-btn { width: 66px; background: #d9534f; border-color: #d43f3a; font-family: Roboto, sans-serif; padding: 0; flex: none; }
.tail { position: absolute; left: 295px; top: 320px; width: 22px; height: 25px; }
.pegman, .zoom { position: absolute; right: 10px; width: 28px; background: #fff; border-radius: 2px; box-shadow: 0 1px 4px rgba(0,0,0,.3); display: flex; align-items: center; }
.pegman { top: 432px; height: 28px; justify-content: center; }
.pegman svg { width: 12px; height: 20px; }
.zoom { top: 471px; height: 55px; flex-direction: column; justify-content: center; gap: 7px; }
.zoom svg { width: 12px; height: 12px; }
.zoom i { width: 19px; height: 1px; background: #e0e0e0; }
.credits { position: absolute; right: 0; bottom: 0; height: 14px; width: 286px; padding: 0 6px 0 5px; background: rgba(245,245,245,.75); display: flex; justify-content: space-between; font-size: 10px; line-height: 13px; color: #444; white-space: nowrap; }
```
